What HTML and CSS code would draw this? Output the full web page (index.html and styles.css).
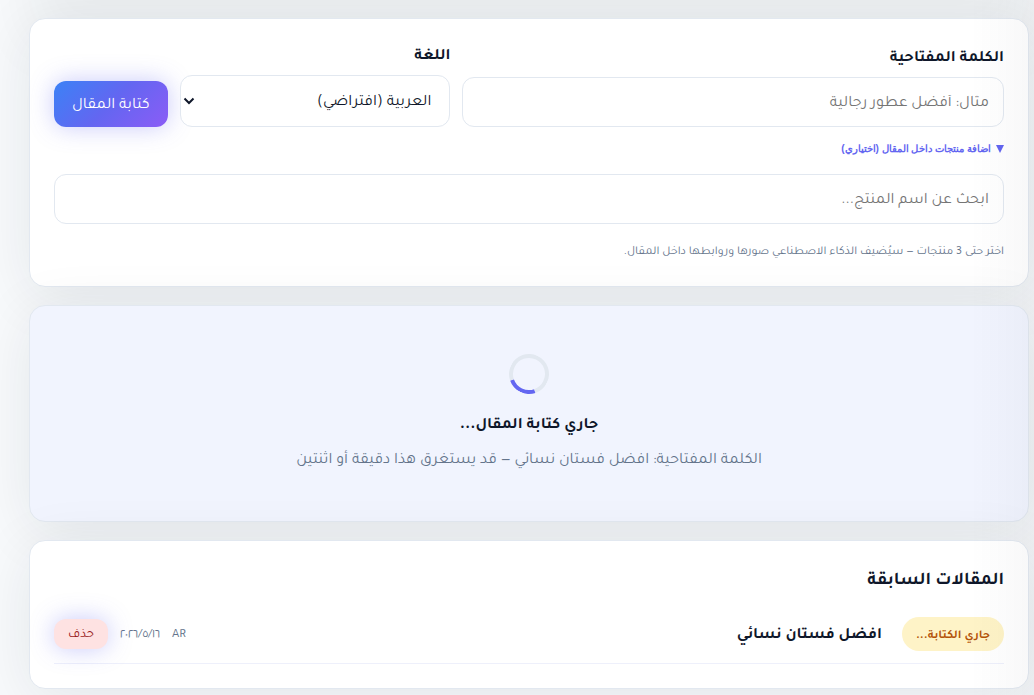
FILE: index.html
```html
<!DOCTYPE html>
<html lang="ar" dir="rtl">
<head>
  <meta charset="UTF-8" />
  <meta name="viewport" content="width=device-width, initial-scale=1.0" />
  <title>كتابة المقالات</title>
  <link rel="stylesheet" href="styles.css">
</head>
<body>

<main class="content">
  <section class="card card-form">
    <form class="article-form">
      <div class="form-row">
        <div class="field">
          <label for="keyword">الكلمة المفتاحية</label>
          <input class="input" type="text" id="keyword" placeholder="مثال: أفضل عطور رجالية">
        </div>
        <div class="field">
          <label for="language">اللغة</label>
          <div class="select-wrap">
            <select class="input" id="language">
              <option>العربية (افتراضي)</option>
            </select>
            <svg class="chevron" viewBox="0 0 12 8" aria-hidden="true"><path d="M1.5 1.5 6 6l4.500-4.500" /></svg>
          </div>
        </div>
        <button class="btn" type="button">كتابة المقال</button>
      </div>
      <button class="toggle" type="button"><svg class="triangle" viewBox="0 0 8 8" aria-hidden="true"><path d="M0 0h8L4 8z" /></svg>اضافة منتجات داخل المقال (اختياري)</button>
      <input class="input" type="text" aria-label="ابحث عن اسم المنتج" placeholder="ابحث عن اسم المنتج...">
      <p class="hint">اختر حتى 3 منتجات — سيُضيف الذكاء الاصطناعي صورها وروابطها داخل المقال.</p>
    </form>
  </section>

  <section class="card card-loading">
    <div class="spinner"></div>
    <h3>جاري كتابة المقال...</h3>
    <p>الكلمة المفتاحية: افضل فستان نسائي — قد يستغرق هذا دقيقة أو اثنتين</p>
  </section>

  <section class="card card-list">
    <h2>المقالات السابقة</h2>
    <div class="article">
      <span class="badge">جاري الكتابة...</span>
      <strong class="article-title">افضل فستان نسائي</strong>
      <span class="meta">AR</span>
      <span class="meta">١٦&rlm;/٥&rlm;/٢٠٢٦</span>
      <button class="btn btn-danger" type="button">حذف</button>
    </div>
  </section>
</main>

</body>
</html>
```
FILE: styles.css
```css
:root {
  --bg: #f8fafc;
  --card-bg: #ffffff;
  --border: #e2e8f0;
  --accent: #6366f1;
  --text-main: #0f172a;
  --text-muted: #64748b;
  --shadow: rgba(15, 35, 42, 0.09);
}

* {
  margin: 0;
  padding: 0;
  box-sizing: border-box;
}

body {
  font-family: Tajawal, "DejaVu Sans", sans-serif;
  font-size: 16px;
  line-height: 24px;
  background: var(--bg);
  color: var(--text-main);
  overflow-x: hidden;
}

body::after {
  content: '';
  position: fixed;
  top: 0;
  bottom: 0;
  right: 0;
  width: 64px;
  background: linear-gradient(to left, rgba(15, 23, 42, 0.03), transparent);
  pointer-events: none;
}

.content {
  display: flex;
  flex-direction: column;
  gap: 18px;
  padding: 18px 5px 6px 29px;
}

.card {
  background: var(--card-bg);
  border: 1px solid var(--border);
  border-radius: 16px;
  padding: 24px;
  box-shadow: 0 10px 60px var(--shadow);
}

.card-form {
  box-shadow: 0 10px 60px var(--shadow), 0 -240px 60px rgba(15, 35, 42, 0.05);
}

.article-form {
  display: flex;
  flex-direction: column;
}

.form-row {
  display: grid;
  grid-template-columns: 2fr 1fr auto;
  gap: 12px;
  align-items: end;
}

.field label {
  display: block;
  margin-bottom: 4px;
  line-height: 28px;
  font-weight: bold;
}

.input {
  display: block;
  width: 100%;
  height: 50px;
  padding: 4px 14px 0;
  border: 1px solid var(--border);
  border-radius: 12px;
  background: var(--card-bg);
  color: var(--text-main);
  font: inherit;
}

.input::placeholder {
  color: #757575;
}

.select-wrap {
  position: relative;
}

.select-wrap .input {
  height: 52px;
  padding: 4px 18px 0;
  appearance: none;
}

.chevron {
  position: absolute;
  left: 3px;
  top: 22px;
  width: 12px;
  height: 8px;
  fill: none;
  stroke: var(--text-main);
  stroke-width: 2;
}

.btn {
  height: 46px;
  padding: 4px 18px 0;
  border: none;
  border-radius: 12px;
  background: linear-gradient(135deg, #3b82f6, #6366f1 50%, #8b5cf6);
  box-shadow: 0 0 24px rgba(99, 102, 241, 0.35);
  color: white;
  font: inherit;
  cursor: pointer;
}

.toggle {
  display: flex;
  align-items: center;
  align-self: flex-start;
  gap: 5px;
  margin: 10px 0 13px;
  border: none;
  background: none;
  color: var(--accent);
  font: bold 10px/24px "Liberation Sans", Arial, sans-serif;
  cursor: pointer;
}

.triangle {
  width: 8px;
  height: 8px;
  fill: currentColor;
}

.hint {
  margin-top: 18px;
  color: var(--text-muted);
  font-size: 12px;
  line-height: 20px;
}

.card-loading {
  padding: 48px 24px;
  background: #f1f4fe;
  text-align: center;
}

.spinner {
  width: 40px;
  height: 40px;
  margin: 0 auto 20px;
  border: 4px solid var(--border);
  border-top-color: var(--accent);
  border-radius: 50%;
  transform: rotate(206deg);
}

.card-loading h3 {
  margin-bottom: 12px;
  font-size: 16px;
}

.card-loading p {
  color: var(--text-muted);
  line-height: 23px;
}

.card-list h2 {
  margin-bottom: 8px;
  font-size: 18px;
  line-height: 32px;
}

.article {
  display: flex;
  align-items: center;
  gap: 12px;
  padding: 12px 0;
  border-bottom: 1px solid #eef0fb;
}

.badge {
  padding: 7px 14px 3px;
  border-radius: 17px;
  background: #fef3c7;
  color: #b45309;
  font-size: 12px;
  font-weight: bold;
}

.article-title {
  flex: 1;
  padding: 4px 8px 0 0;
}

.meta {
  padding-top: 4px;
  color: var(--text-muted);
  font-size: 13px;
}

.btn-danger {
  height: 30px;
  padding: 4px 14px 0;
  background: #fee2e2;
  color: #991b1b;
  font-size: 13px;
}
```
